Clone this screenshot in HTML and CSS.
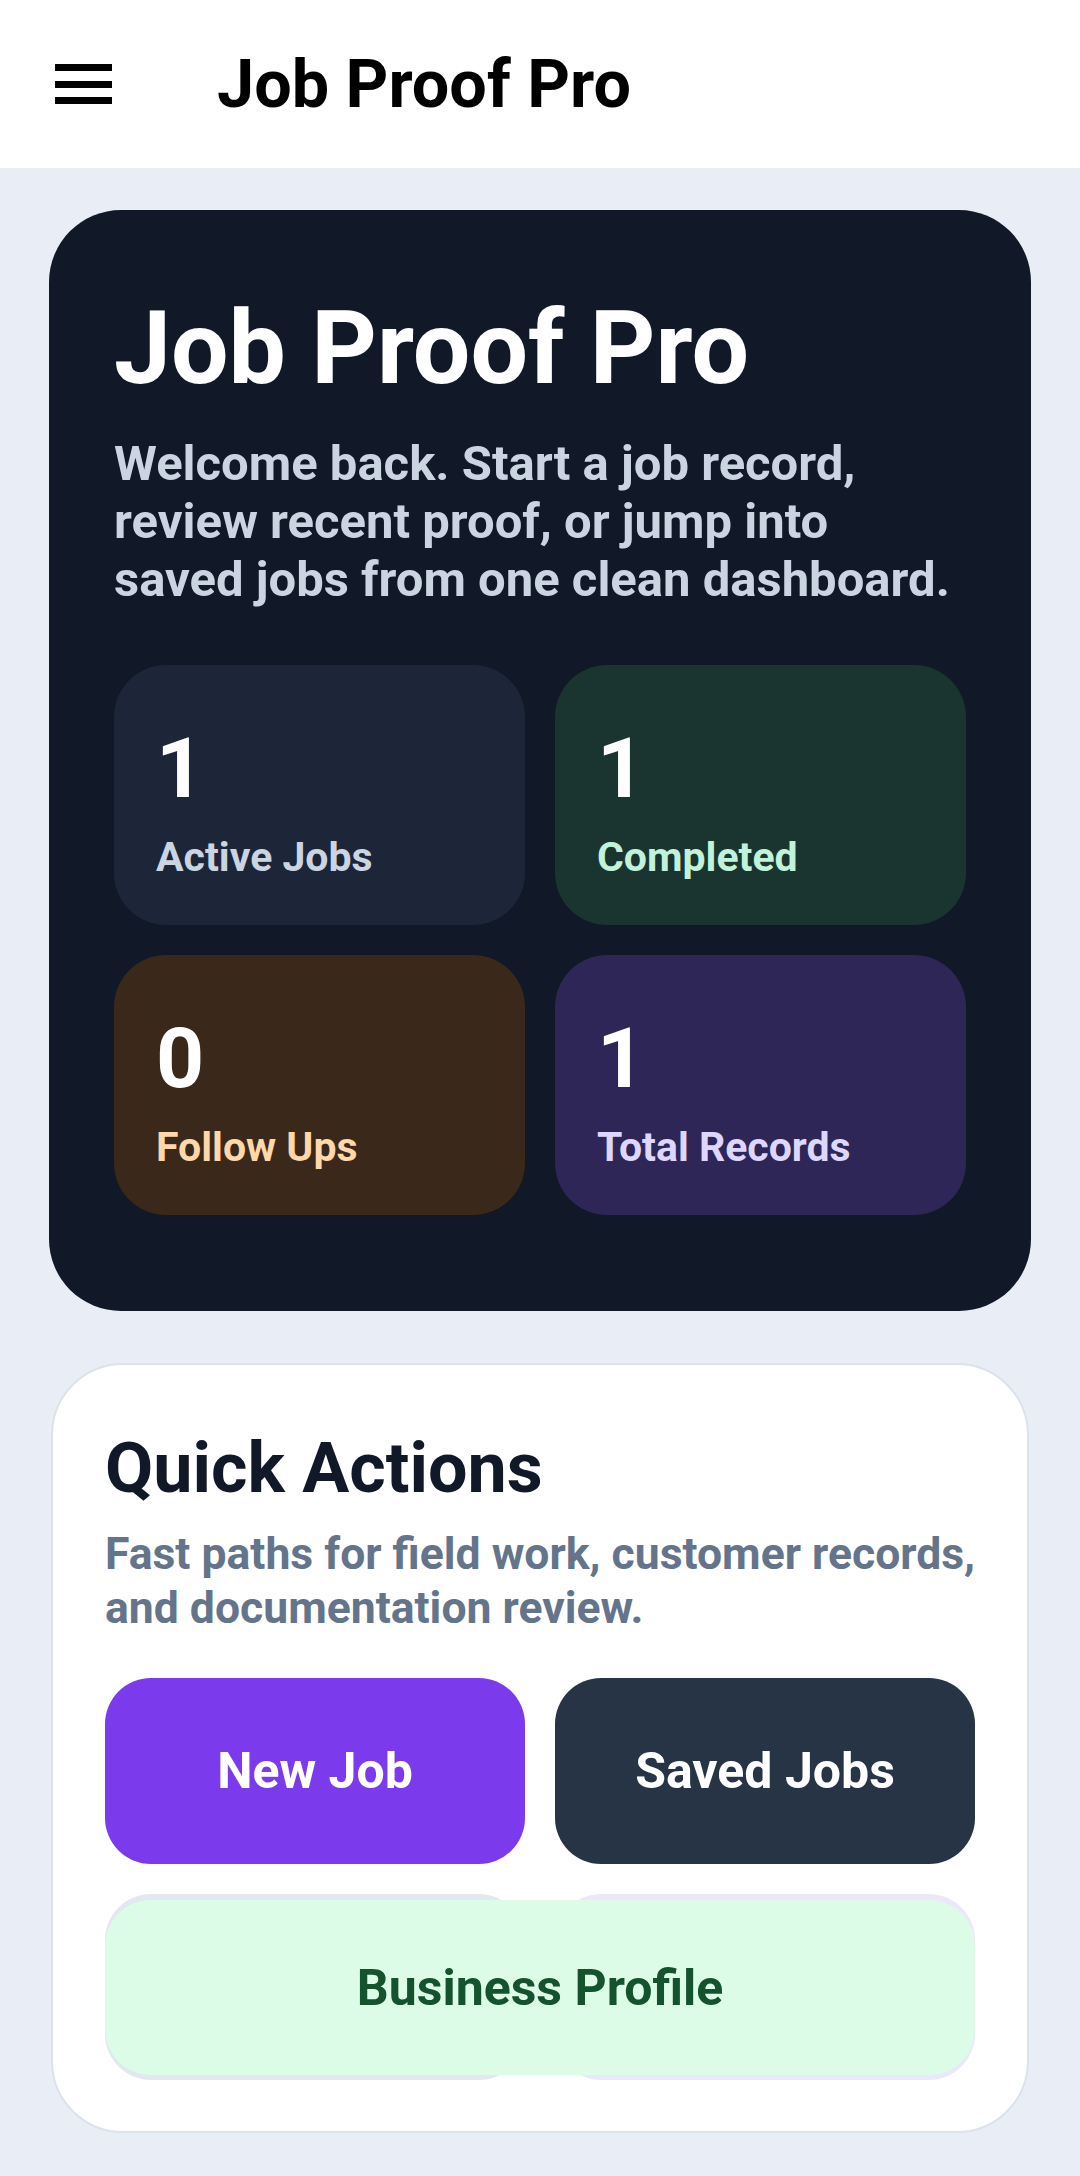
FILE: index.html
```html
<!DOCTYPE html>
<html lang="en">
<head>
  <meta charset="UTF-8">
  <meta name="viewport" content="width=device-width, initial-scale=1.0">
  <title>Job Proof Pro</title>
  <link rel="stylesheet" href="styles.css">
</head>
<body>
  <header class="topbar">
    <button class="menu-btn" aria-label="Open menu">
      <span></span><span></span><span></span>
    </button>
    <div class="topbar-title">Job Proof Pro</div>
  </header>

  <main class="page">
    <!-- Hero / stats -->
    <section class="hero">
      <h1>Job Proof Pro</h1>
      <p class="hero-text">Welcome back. Start a job record, review recent proof, or jump into saved jobs from one clean dashboard.</p>

      <div class="stats">
        <div class="stat stat-active">
          <div class="stat-num">1</div>
          <div class="stat-label">Active Jobs</div>
        </div>
        <div class="stat stat-done">
          <div class="stat-num">1</div>
          <div class="stat-label">Completed</div>
        </div>
        <div class="stat stat-follow">
          <div class="stat-num">0</div>
          <div class="stat-label">Follow Ups</div>
        </div>
        <div class="stat stat-total">
          <div class="stat-num">1</div>
          <div class="stat-label">Total Records</div>
        </div>
      </div>
    </section>

    <!-- Quick actions -->
    <section class="actions-card">
      <h2>Quick Actions</h2>
      <p class="actions-text">Fast paths for field work, customer records, and documentation review.</p>

      <div class="action-row">
        <button class="action action-new">New Job</button>
        <button class="action action-saved">Saved Jobs</button>
      </div>
      <div class="action-row action-row-stack">
        <button class="action action-slate" aria-label="Customers"></button>
        <button class="action action-violet" aria-label="Records"></button>
        <button class="action action-profile">Business Profile</button>
      </div>
    </section>
  </main>
</body>
</html>
```

FILE: styles.css
```css
body {
  margin: 0;
  background-color: #e9eef6;
  font-family: Roboto, "Noto Sans", Arial, sans-serif;
  color: #111827;
}

button {
  font-family: inherit;
  border: none;
  cursor: pointer;
}

/* Top app bar */
.topbar {
  height: 168px;
  background: #fff;
  display: flex;
  align-items: center;
  padding-left: 55px;
}

.menu-btn {
  width: 57px;
  height: 40px;
  padding: 0;
  background: none;
  display: flex;
  flex-direction: column;
  justify-content: space-between;
}

.menu-btn span {
  display: block;
  height: 7px;
  background: #000;
}

.topbar-title {
  margin-left: 105px;
  font-size: 66.5px;
  font-weight: 700;
  color: #000;
}

.page {
  padding: 42px 49px 44px;
}

/* Hero */
.hero {
  background: #111827;
  border-radius: 72px;
  padding: 82px 65px 96px;
}

.hero h1 {
  margin: 0;
  font-size: 102px;
  line-height: 112px;
  font-weight: 700;
  color: #fff;
}

.hero-text {
  margin: 31px 0 0;
  font-size: 49px;
  line-height: 57.75px;
  font-weight: 700;
  color: #cbd5e1;
}

.stats {
  margin-top: 57px;
  display: grid;
  grid-template-columns: 1fr 1fr;
  gap: 30px;
}

.stat {
  border-radius: 52px;
  padding: 62px 42px 44px;
}

.stat-num {
  font-size: 84px;
  line-height: 84px;
  font-weight: 700;
  color: #fff;
}

.stat-label {
  margin-top: 22px;
  font-size: 41px;
  line-height: 48px;
  font-weight: 700;
}

.stat-active { background: #1c2638; }
.stat-active .stat-label { color: #cbd5e1; }
.stat-done { background: #1a352f; }
.stat-done .stat-label { color: #c2f2da; }
.stat-follow { background: #3a281b; }
.stat-follow .stat-label { color: #fed7aa; }
.stat-total { background: #2e2656; }
.stat-total .stat-label { color: #ddd6fe; }

/* Quick actions */
.actions-card {
  margin: 52px 2px 0;
  background: #fff;
  border: 2px solid #dbe2ea;
  border-radius: 72px;
  padding: 63px 52px 51px;
}

.actions-card h2 {
  margin: 0;
  font-size: 70px;
  line-height: 80px;
  font-weight: 700;
  color: #111827;
}

.actions-text {
  margin: 19px 0 0;
  font-size: 44.5px;
  line-height: 54px;
  font-weight: 700;
  color: #64748b;
}

.action-row {
  display: grid;
  grid-template-columns: 1fr 1fr;
  gap: 30px;
  margin-top: 43px;
}

.action-row + .action-row {
  margin-top: 30px;
}

.action {
  height: 186px;
  border-radius: 46px;
  font-size: 50px;
  font-weight: 700;
  color: #fff;
}

.action-new { background: #7c3aed; }
.action-saved { background: #263445; }
.action-slate { background: #e3e7f0; }
.action-violet { background: #ebe8fa; }

.action-row-stack {
  position: relative;
}

/* Business Profile sits over the second row */
.action-profile {
  position: absolute;
  top: 6px;
  bottom: 5px;
  left: 0;
  right: 0;
  height: auto;
  background: #dcfce7;
  color: #14532d;
}
```
